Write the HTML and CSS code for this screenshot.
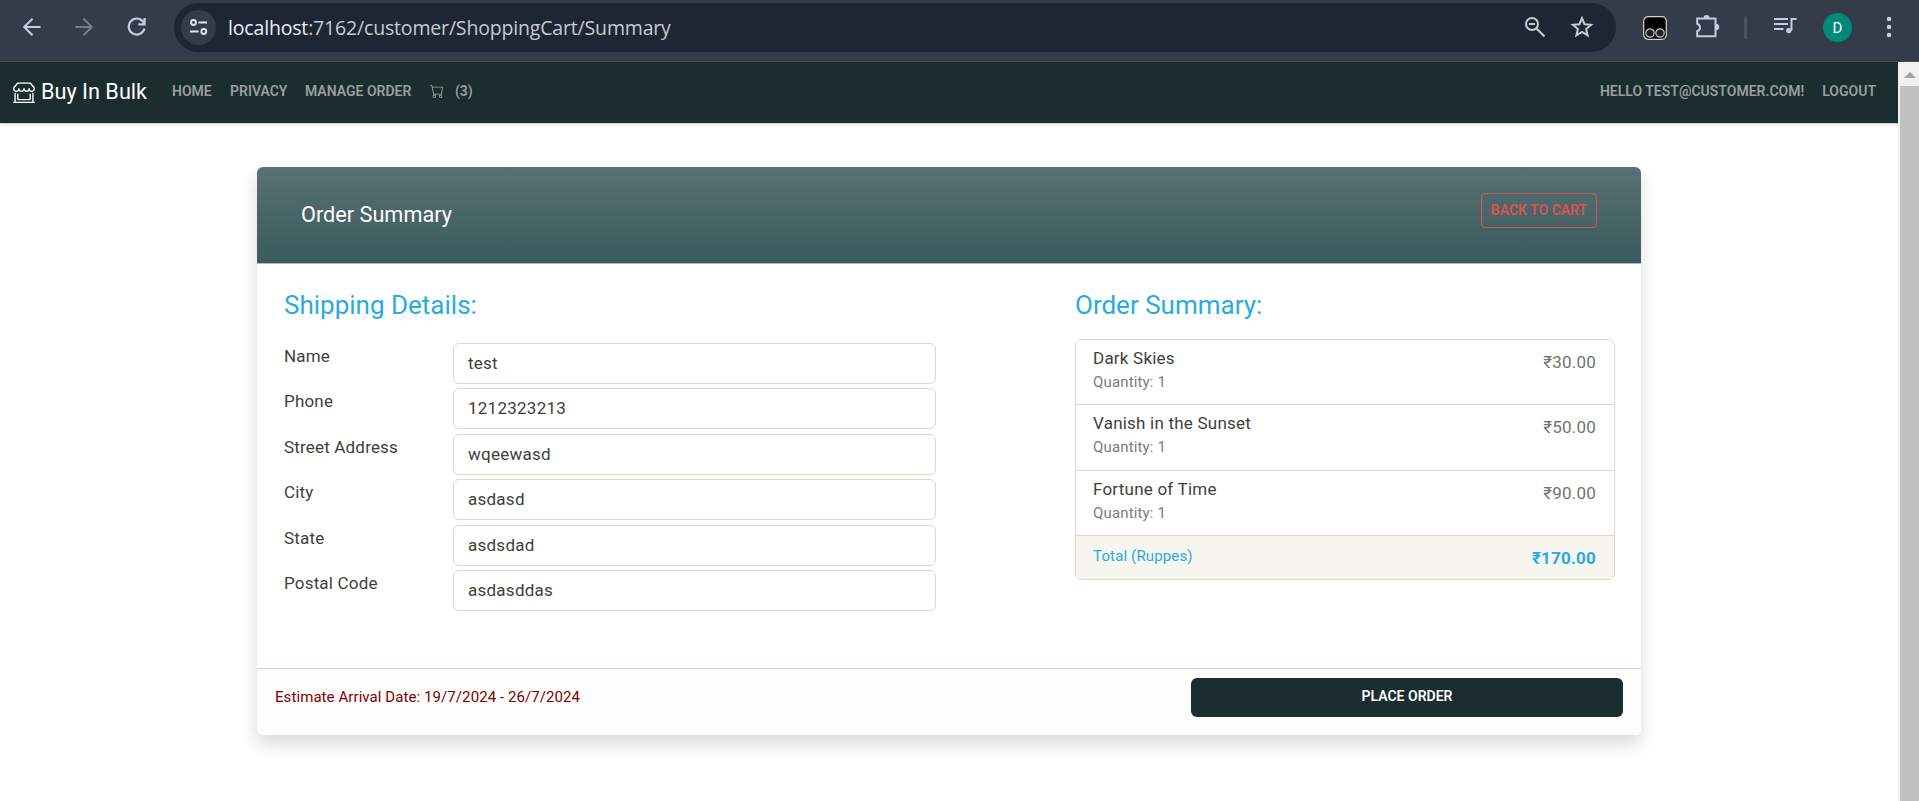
FILE: index.html
```html
<!DOCTYPE html>
<html lang="en">
<head>
<meta charset="utf-8">
<title>Order Summary - Buy In Bulk</title>
<link rel="stylesheet" href="styles.css">
</head>
<body>
<header class="chrome">
  <svg class="ic back" width="20" height="20" viewBox="0 0 20 20"><path d="M18.500 10H2.500M10.500 1.800L2.200 10l8.300 8.200"/></svg>
  <svg class="ic forward" width="20" height="20" viewBox="0 0 20 20"><path d="M1.500 10h16M9.500 1.800L17.800 10l-8.300 8.200"/></svg>
  <svg class="ic reload" width="20" height="20" viewBox="0 0 20 20"><path d="M17.500 11.500A8 8 0 1 1 16 4.500L17.600 6.500M17.600 1v6.400h-6.300"/></svg>
  <div class="omnibox">
    <span class="site-info"><svg width="20" height="16" viewBox="0 0 20 16"><g fill="none" stroke="#dfe3ea" stroke-width="2"><circle cx="4.500" cy="3.500" r="2.400"/><path d="M9.500 3.500h8.500M1 12.500h8.500"/><circle cx="14.800" cy="12.500" r="2.400"/></g></svg></span>
    <span class="url"><b>localhost</b>:7162/customer/ShoppingCart/Summary</span>
    <svg class="ic mag" width="22" height="22" viewBox="0 0 22 22"><circle cx="8" cy="8" r="6"/><path d="M12.500 12.500L20.500 20.500M5 8h6"/></svg>
    <svg class="ic star" width="24" height="24" viewBox="0 0 24 24"><path d="M12 3.200l2.500 6 6.600.5-5 4.300 1.500 6.400L12 17l-5.600 3.400L7.900 14l-5-4.300 6.600-.5z"/></svg>
  </div>
  <svg class="ext" width="24" height="24" viewBox="0 0 24 24"><rect x=".7" y=".7" width="22.600" height="22.600" rx="4.500" fill="#000" stroke="#d4d4d4" stroke-width="1.200"/><g fill="#1c2230" stroke="#c4c4c4" stroke-width="1.200"><circle cx="7" cy="17" r="4.200"/><circle cx="17" cy="17" r="4.200"/></g></svg>
  <svg class="ic puzzle" width="25" height="25" viewBox="0 0 25 25"><path d="M2.200 4.500h18.300v17.800H2.200v-5a4 4 0 0 0 0-7.600z"/><path class="solid" d="M8.500 4a3 3 0 0 1 6 0zM21 9.800a3.200 3.200 0 0 1 0 6.400z"/></svg>
  <span class="divider"></span>
  <svg class="ic media" width="23" height="18" viewBox="0 0 23 18"><path d="M0 2h14M0 7h14M0 12h9.500M17.500 13.500V2H22.500"/><circle class="solid" cx="14.800" cy="13.600" r="2.700"/></svg>
  <span class="avatar">D</span>
  <svg class="dots" width="6" height="22" viewBox="0 0 6 22"><circle cx="3" cy="3" r="2.300"/><circle cx="3" cy="11" r="2.300"/><circle cx="3" cy="19" r="2.300"/></svg>
</header>
<div class="viewport">
  <div class="page">
    <nav class="navbar">
      <a class="brand"><svg width="22" height="22" viewBox="0 0 16 16"><path d="M2.970 1.350A1 1 0 0 1 3.730 1h8.540a1 1 0 0 1 .76.35l2.609 3.044A1.500 1.500 0 0 1 16 5.370v.255a2.375 2.375 0 0 1-4.250 1.458A2.370 2.370 0 0 1 9.875 8 2.370 2.370 0 0 1 8 7.083 2.370 2.370 0 0 1 6.125 8a2.370 2.370 0 0 1-1.875-.917A2.375 2.375 0 0 1 0 5.625V5.370a1.500 1.500 0 0 1 .361-.976zm1.780 4.275a1.375 1.375 0 0 0 2.750 0 .5.5 0 0 1 1 0 1.375 1.375 0 0 0 2.750 0 .5.5 0 0 1 1 0 1.375 1.375 0 1 0 2.750 0V5.370a.5.5 0 0 0-.12-.325L12.270 2H3.730L1.120 5.045A.5.5 0 0 0 1 5.370v.255a1.375 1.375 0 0 0 2.750 0 .5.5 0 0 1 1 0M1.500 8.500A.5.5 0 0 1 2 9v6h12V9a.5.5 0 0 1 1 0v6h.5a.5.5 0 0 1 0 1H.5a.5.5 0 0 1 0-1H1V9a.5.5 0 0 1 .5-.5m2 .5a.5.5 0 0 1 .5.5V13h8V9.500a.5.5 0 0 1 1 0V13a1 1 0 0 1-1 1H4a1 1 0 0 1-1-1V9.500a.5.5 0 0 1 .5-.5"/></svg><span class="brand-name">Buy In Bulk</span></a>
      <a class="link home">Home</a>
      <a class="link privacy">Privacy</a>
      <a class="link manage">Manage Order</a>
      <a class="link cart"><svg width="14" height="14" viewBox="0 0 16 16"><path d="M0 1.500A.5.5 0 0 1 .5 1H2a.5.5 0 0 1 .485.379L2.890 3H14.500a.5.5 0 0 1 .491.592l-1.500 8A.5.5 0 0 1 13 12H4a.5.5 0 0 1-.491-.408L2.010 3.607 1.610 2H.5a.5.5 0 0 1-.5-.5M3.102 4l1.313 7h8.170l1.313-7zM5 12a2 2 0 1 0 0 4 2 2 0 0 0 0-4m7 0a2 2 0 1 0 0 4 2 2 0 0 0 0-4m-7 1a1 1 0 1 1 0 2 1 1 0 0 1 0-2m7 0a1 1 0 1 1 0 2 1 1 0 0 1 0-2"/></svg><span>(3)</span></a>
      <a class="link hello">Hello test@customer.com!</a>
      <a class="link logout">Logout</a>
    </nav>
    <main class="card">
      <div class="card-header">
        <h1>Order Summary</h1>
        <a class="back-btn">Back to Cart</a>
      </div>
      <div class="card-body">
        <section class="shipping">
          <h2>Shipping Details:</h2>
          <div class="form">
            <div class="field"><label>Name</label><div class="input">test</div></div>
            <div class="field"><label>Phone</label><div class="input">1212323213</div></div>
            <div class="field"><label>Street Address</label><div class="input">wqeewasd</div></div>
            <div class="field"><label>City</label><div class="input">asdasd</div></div>
            <div class="field"><label>State</label><div class="input">asdsdad</div></div>
            <div class="field"><label>Postal Code</label><div class="input">asdasddas</div></div>
          </div>
        </section>
        <section class="summary">
          <h2>Order Summary:</h2>
          <ul class="items">
            <li><div><h3>Dark Skies</h3><small>Quantity: 1</small></div><span class="price">₹30.00</span></li>
            <li><div><h3>Vanish in the Sunset</h3><small>Quantity: 1</small></div><span class="price">₹50.00</span></li>
            <li><div><h3>Fortune of Time</h3><small>Quantity: 1</small></div><span class="price">₹90.00</span></li>
            <li class="total"><small>Total (Ruppes)</small><strong class="price">₹170.00</strong></li>
          </ul>
        </section>
      </div>
      <div class="card-footer">
        <p>Estimate Arrival Date: 19/7/2024 - 26/7/2024</p>
        <button class="place">Place Order</button>
      </div>
    </main>
  </div>
  <div class="scrollbar"><div class="up"><svg width="12" height="6" viewBox="0 0 12 6"><path d="M6 0l6 6H0z" fill="#a3a3a3"/></svg></div><div class="thumb"></div></div>
</div>
</body>
</html>
```
FILE: styles.css
```css
* { box-sizing: border-box; }
body { margin: 0; width: 1919px; height: 801px; overflow: hidden; background: #fff; font-family: Roboto, sans-serif; color: #3e3f3a; }
h1, h2, h3, p, ul { margin: 0; padding: 0; font-weight: 400; }

/* Browser toolbar */
.chrome { display: flex; align-items: center; height: 62px; padding-bottom: 7px; background: #343c4c; border-bottom: 1px solid #474b51; }
.ic { fill: none; stroke: #c3cce3; stroke-width: 2; flex: none; }
.ic .solid { fill: #c3cce3; stroke: none; }
.back { margin-left: 22px; }
.forward { margin-left: 32px; stroke: #767d8b; }
.reload { margin-left: 33px; stroke-width: 2.2; }
.omnibox { display: flex; align-items: center; width: 1442px; height: 49px; margin-left: 27px; padding-left: 7px; border-radius: 25px; background: #1e2636; }
.site-info { display: flex; align-items: center; justify-content: center; width: 35px; height: 35px; border-radius: 50%; background: #343c4c; }
.url { flex: 1; margin-left: 12px; padding-top: 2px; font: 19.5px/28px "Open Sans", "Noto Sans", sans-serif; letter-spacing: -.17px; color: #c7cad1; white-space: nowrap; }
.url b { font-weight: 400; color: #eceef2; }
.mag { margin-right: 24px; stroke: #c9cbd0; }
.star { margin-right: 22px; stroke: #c9cbd0; }
.ext { margin: 1px 0 0 27px; }
.puzzle { margin: -2px 0 0 28px; }
.divider { width: 3px; height: 23px; margin-left: 24px; border-radius: 2px; background: #4b5467; }
.media { margin: -2px 0 0 27px; }
.avatar { width: 29px; height: 29px; margin-left: 26px; border-radius: 50%; background: #00897b; color: #fff; font-size: 15px; line-height: 30px; text-align: center; }
.dots { margin-left: 34px; fill: #c3cce3; }

/* Page area */
.viewport { display: flex; height: 739px; }
.page { width: 1898px; }
.scrollbar { width: 21px; padding-left: 2px; background: #f1f1f1; }
.up { display: flex; justify-content: center; height: 24px; padding-top: 10px; }
.thumb { height: 715px; background: #c1c1c1; }
.navbar { display: flex; align-items: center; height: 61px; padding: 0 22px 3px 13px; background: #1b2d2f; box-shadow: 0 2px 4px rgba(0,0,0,.09), 0 1px 0 #dcdcdc; }
.brand { display: flex; align-items: center; width: 159px; padding-top: 1px; color: #fff; }
.brand svg { fill: #fff; }
.brand-name { margin-left: 6px; font-size: 21.7px; line-height: 30px; white-space: nowrap; }
.link { color: #989f9f; font-size: 14px; font-weight: 600; line-height: 20px; text-transform: uppercase; white-space: nowrap; }
.home { width: 58px; }
.privacy { width: 75px; }
.manage { width: 125px; }
.cart { display: flex; align-items: center; gap: 11px; }
.cart svg { fill: currentColor; }
.hello { margin-left: auto; margin-right: 18px; }

/* Order card */
.card { width: 1384px; height: 568px; margin: 44px 0 0 257px; border-radius: 6px; background: #fff; box-shadow: 0 9px 18px rgba(0,0,0,.15); }
.card-header { display: flex; justify-content: space-between; height: 97px; padding: 26px 44px 0; border-bottom: 1px solid #b4b8b4; border-radius: 6px 6px 0 0; background: linear-gradient(#587174, #3a5a5d); }
h1 { margin-top: 8px; color: #fff; font-size: 21.7px; line-height: 28px; }
.back-btn { width: 116px; height: 35px; border: 1px solid #d9534f; border-radius: 4px; color: #d9534f; font-size: 14px; font-weight: 600; line-height: 33px; text-align: center; text-transform: uppercase; white-space: nowrap; }
.card-body { display: flex; justify-content: space-between; height: 404px; padding: 24px 26px 0 27px; }
.shipping { width: 652px; }
.summary { width: 540px; }
h2 { color: #29abe0; font-size: 26px; line-height: 34px; white-space: nowrap; }
.form { margin-top: 21px; }
.field { display: flex; width: 652px; height: 45.4px; }
label { width: 169px; padding-top: 2px; font-size: 17px; line-height: 22px; letter-spacing: .18px; }
.input { width: 483px; height: 41px; padding-left: 14px; border: 1px solid #dfd7ca; border-radius: 6px; font-size: 17px; line-height: 39px; letter-spacing: .25px; }
.items { margin-top: 17px; list-style: none; border: 1px solid #dfd7ca; border-radius: 6px; overflow: hidden; }
.items li { display: flex; justify-content: space-between; height: 65.3px; padding: 7px 18px 0 17px; border-bottom: 1px solid #dfd7ca; }
.items li.total { height: 43px; border: 0; background: #f6f5f0; color: #29abe0; }
h3 { font-size: 17px; line-height: 22px; letter-spacing: .22px; white-space: nowrap; }
small { display: block; font-size: 15px; line-height: 20px; letter-spacing: .15px; color: #7b7c77; }
h3 + small { margin-top: 3px; }
.total small { padding-top: 3px; color: #29abe0; }
.price { padding-top: 4px; font-size: 17px; line-height: 22px; letter-spacing: .2px; color: #737470; }
strong.price { font-weight: 700; color: #29abe0; }
.card-footer { display: flex; justify-content: space-between; height: 67px; padding: 9px 18px 0; border-top: 1px solid #dfd7ca; border-radius: 0 0 6px 6px; background: #fdfdfb; }
p { padding-top: 8px; color: #800000; font-size: 15px; line-height: 22px; letter-spacing: .08px; }
.place { width: 432px; height: 39px; padding: 0 0 3px; border: 0; border-radius: 6px; background: #1b2d2f; color: #fff; font: 600 14px/20px Roboto, sans-serif; text-transform: uppercase; }
```
